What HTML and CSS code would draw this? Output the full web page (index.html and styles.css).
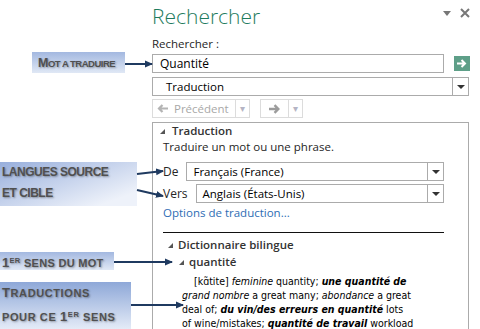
FILE: index.html
```html
<!DOCTYPE html>
<html lang="fr">

<head>
    <meta charset="utf-8">
    <meta name="viewport" content="width=device-width, initial-scale=1.0">
    <title>Rechercher</title>
    <link rel="stylesheet" href="styles.css">
</head>

<body>

    <div class="pane">
        <header class="pane-head">
            <h1>Rechercher</h1>
            <div class="pane-ctrl">
                <svg width="8" height="5" viewBox="0 0 8 5"><path d="M0 0h8L4 5z" fill="#777" /></svg>
                <svg width="10" height="10" viewBox="0 0 10 10"><path d="M1 1l8 8M9 1l-8 8" stroke="#777" stroke-width="2" /></svg>
            </div>
        </header>

        <div class="lbl">Rechercher :</div>
        <div class="search-row">
            <div class="field">Quantité</div>
            <div class="go">
                <svg width="10" height="9" viewBox="0 0 10 9"><path d="M0 4.5h7M4.5 1l3.5 3.5L4.5 8" stroke="#fff" stroke-width="2" fill="none" /></svg>
            </div>
        </div>

        <div class="select wide">
            <span class="val">Traduction</span>
            <span class="drop"><i class="caret"></i></span>
        </div>

        <div class="nav-row">
            <div class="navbtn prev">
                <span class="main">
                    <svg width="11" height="9" viewBox="0 0 11 9"><path d="M11 4.5H3M5.5 1L2 4.5L5.5 8" stroke="#b4b4b4" stroke-width="2.2" fill="none" /></svg>
                    Précédent
                </span>
                <span class="split">&#9662;</span>
            </div>
            <div class="navbtn next">
                <span class="main">
                    <svg width="12" height="10" viewBox="0 0 12 10"><path d="M0 5h9M5.5 1.2L9.3 5L5.5 8.8" stroke="#9c9c9c" stroke-width="2.4" fill="none" /></svg>
                </span>
                <span class="split">&#9662;</span>
            </div>
        </div>

        <section class="section">
            <div class="sec-title"><i class="exp"></i>Traduction</div>
            <p class="hint">Traduire un mot ou une phrase.</p>
            <div class="lang-row">
                <span>De</span>
                <div class="select"><span class="val">Français (France)</span><span class="drop"><i class="caret"></i></span></div>
            </div>
            <div class="lang-row">
                <span>Vers</span>
                <div class="select"><span class="val">Anglais (États-Unis)</span><span class="drop"><i class="caret"></i></span></div>
            </div>
            <a class="opts" href="#">Options de traduction...</a>
            <hr>
            <div class="dict-title"><i class="exp"></i>Dictionnaire bilingue</div>
            <div class="entry-title"><i class="exp"></i>quantité</div>
            <div class="def">
                [kɑ̃tite] <i>feminine</i> quantity; <b>une quantité de</b><br>
                <i>grand nombre</i> a great many; <i>abondance</i> a great<br>
                deal of; <b>du vin/des erreurs en quantité</b> lots<br>
                of wine/mistakes; <b>quantité de travail</b> workload
            </div>
        </section>
    </div>

    <!-- notes on the left -->
    <div class="note n1"><span class="big">M</span>ot a traduire</div>
    <div class="note n2">Langues source<br>et cible</div>
    <div class="note n3"><span class="big">1</span><sup>er</sup> sens du mot</div>
    <div class="note n4"><span class="big">T</span>raductions<br>pour ce <span class="big">1</span><sup>er</sup> sens</div>

    <svg class="arrows" width="480" height="329" viewBox="0 0 480 329">
        <defs>
            <marker id="head" markerWidth="8" markerHeight="8" refX="7" refY="4" orient="auto" markerUnits="userSpaceOnUse">
                <path d="M0 0.5L8 4L0 7.5z" fill="#1f3a60" />
            </marker>
        </defs>
        <g stroke="#1f3a60" stroke-width="2" marker-end="url(#head)">
            <line x1="125" y1="64" x2="152" y2="64" />
            <line x1="137" y1="174" x2="163" y2="171" />
            <line x1="137" y1="190" x2="163" y2="196" />
            <line x1="114" y1="262" x2="172" y2="262" />
            <line x1="131" y1="305" x2="183" y2="305" />
        </g>
    </svg>

</body>

</html>
```

FILE: styles.css
```css
* {
    box-sizing: border-box;
    padding: 0;
    margin: 0;
}

body {
    background: white;
    width: 480px;
    height: 329px;
    overflow: hidden;
    position: relative;
    font-family: "Open Sans", "Noto Sans", sans-serif;
    font-size: 11.5px;
    color: #262626;
}

.pane {
    margin-left: 152px;
    width: 318px;
    padding-top: 4px;
}

.pane-head {
    display: flex;
    justify-content: space-between;
}

h1 {
    font-size: 21px;
    line-height: 24px;
    font-weight: 300;
    color: #1e7b5e;
}

.pane-ctrl {
    display: flex;
    align-items: center;
    gap: 9px;
    height: 10px;
    margin-top: 4px;
}

.lbl {
    line-height: 15px;
    margin-top: 8px;
}

.search-row {
    display: flex;
    align-items: center;
    gap: 10px;
    margin-top: 3px;
}

.field {
    width: 292px;
    height: 19px;
    border: 1px solid #ababab;
    padding-left: 7px;
    line-height: 17px;
    font-size: 12px;
    color: #000;
}

.go {
    width: 16px;
    height: 15px;
    background: #5e9f88;
    display: flex;
    align-items: center;
    justify-content: center;
}

.select {
    display: flex;
    height: 19px;
    border: 1px solid #ababab;
    line-height: 17px;
    color: #000;
}

.select .val {
    flex: 1;
    padding-left: 6px;
}

.select.wide {
    width: 317px;
    margin-top: 4px;
}

.select.wide .val {
    padding-left: 13px;
}

.drop {
    width: 16px;
    border-left: 1px solid #ababab;
    display: flex;
    align-items: center;
    justify-content: center;
}

.caret {
    border-left: 4px solid transparent;
    border-right: 4px solid transparent;
    border-top: 4px solid #333;
}

.nav-row {
    display: flex;
    gap: 10px;
    margin-top: 3px;
}

.navbtn {
    display: flex;
    height: 19px;
    border: 1px solid #dcdcdc;
    color: #a8a8a8;
    line-height: 17px;
}

.navbtn .main {
    display: flex;
    align-items: center;
    gap: 6px;
    padding: 0 4px;
}

.navbtn .split {
    border-left: 1px solid #dcdcdc;
    width: 14px;
    text-align: center;
    font-size: 10px;
    color: #b4b4c4;
}

.prev {
    width: 98px;
}

.prev .main {
    width: 84px;
}

.next {
    width: 43px;
}

.next .main {
    width: 28px;
    justify-content: center;
}

.section {
    margin-top: 4px;
    width: 317px;
    height: 220px;
    border: 1px solid #ababab;
    padding: 1px 24px 0 10px;
}

.exp {
    display: inline-block;
    width: 0;
    height: 0;
    border-left: 5px solid transparent;
    border-bottom: 5px solid #555;
    margin-right: 7px;
    vertical-align: 1px;
}

.sec-title {
    line-height: 14px;
    margin-left: -3px;
    font-weight: 600;
    color: #333;
}

.hint {
    line-height: 14px;
    margin-top: 2px;
}

.lang-row {
    display: flex;
    gap: 8px;
    align-items: center;
    margin-top: 8px;
    font-size: 12px;
}

.lang-row + .lang-row {
    margin-top: 3px;
}

.lang-row .select {
    flex: 1;
    font-size: 11.5px;
}

.opts {
    display: block;
    line-height: 14px;
    margin-top: 3px;
    color: #2e6db4;
    text-decoration: none;
}

hr {
    border: 0;
    border-top: 1px solid #111;
    margin-top: 12px;
}

.dict-title {
    line-height: 14px;
    margin-top: 5px;
    margin-left: 5px;
    font-weight: 600;
    color: #333;
}

.entry-title {
    line-height: 14px;
    margin-top: 3px;
    margin-left: 16px;
    font-weight: 600;
    color: #333;
}

.entry-title .exp,
.dict-title .exp {
    margin-right: 5px;
}

.def {
    margin-top: 5px;
    margin-left: 19px;
    text-indent: 12px;
    white-space: nowrap;
    font-family: "DejaVu Sans", sans-serif;
    font-stretch: condensed;
    font-size: 10.5px;
    line-height: 14px;
    color: #000;
}

.def b {
    font-style: italic;
}

/* notes */

.note {
    position: absolute;
    font-family: "Liberation Sans", Arial, sans-serif;
    font-weight: bold;
    font-size: 11px;
    text-transform: uppercase;
    color: #505050;
    text-shadow: 1px 1px 2px rgba(0, 0, 0, 0.35);
    background: linear-gradient(#a3b8e0, #e0e8f5);
}

.note .big {
    font-size: 13px;
}

.note sup {
    font-size: 7.5px;
    vertical-align: 4px;
}

.n1 {
    left: 32px;
    top: 52px;
    width: 93px;
    height: 21px;
    padding-left: 6px;
    line-height: 22px;
    font-size: 9.5px;
    letter-spacing: -0.5px;
}

.n1 .big {
    font-size: 12.5px;
}

.n2 {
    left: 0;
    top: 162px;
    width: 137px;
    height: 44px;
    padding-left: 2px;
    line-height: 21px;
    font-size: 12px;
    letter-spacing: -0.5px;
    background: linear-gradient(160deg, #98afdc, #eef2fa 85%);
}

.n3 {
    left: 0;
    top: 252px;
    width: 114px;
    height: 18px;
    padding-left: 2px;
    line-height: 18px;
    letter-spacing: 0.3px;
}

.n4 {
    left: 0;
    top: 282px;
    width: 131px;
    height: 47px;
    padding: 0 0 0 2px;
    line-height: 22px;
    letter-spacing: 0.6px;
    background: linear-gradient(#8ea8d8, #e4ebf7);
}

.arrows {
    position: absolute;
    left: 0;
    top: 0;
}
```
